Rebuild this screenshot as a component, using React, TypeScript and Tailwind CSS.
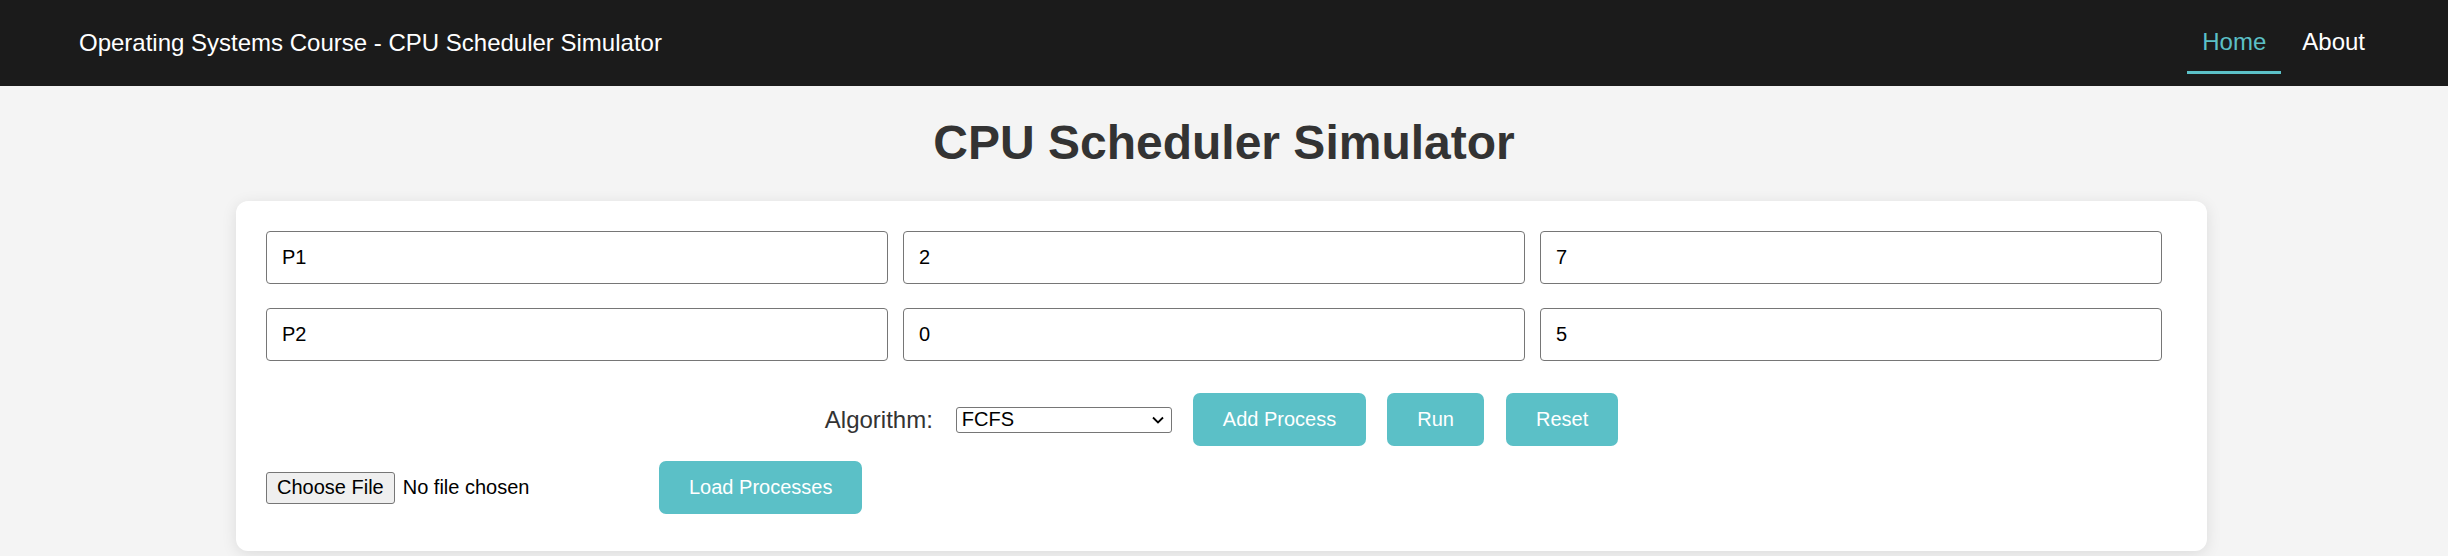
import React from "react";

export default function App() {
  const btn =
    "h-[53px] px-[30px] rounded-[7px] bg-[#5bc0c7] text-white text-[20px] leading-[23px] flex items-center justify-center";
  const inp =
    "h-[53px] w-full border border-[#767676] rounded-[4px] px-[15px] text-[20px] text-black bg-white outline-none";
  return (
    <div className="min-h-screen bg-[#f4f4f4] font-['Liberation_Sans',Arial,sans-serif]">
      <nav className="h-[86px] bg-[#1b1b1b] flex items-center justify-between pl-[79px] pr-[68px]">
        <div className="text-white text-[24px] leading-[28px]">
          Operating Systems Course - CPU Scheduler Simulator
        </div>
        <div className="flex items-center gap-[6px] text-[24px] leading-[28px]">
          <a className="px-[15px] pt-[15px] pb-[15px] border-b-[3px] border-[#5bc0c7] text-[#5bc0c7]">
            Home
          </a>
          <a className="px-[15px] pt-[15px] pb-[18px] text-white">About</a>
        </div>
      </nav>

      <h1 className="mt-[29px] mb-[31px] text-center text-[48px] leading-[55px] font-bold text-[#333]">
        CPU Scheduler Simulator
      </h1>

      <div className="ml-[236px] w-[1971px] bg-white rounded-[12px] shadow-[0_3px_15px_rgba(0,0,0,0.1)] px-[30px] pt-[30px] pb-[37px]">
        <div className="w-[1896px] grid grid-cols-3 gap-x-[15px] gap-y-[24px]">
          <input className={inp} defaultValue="P1" />
          <input className={inp} defaultValue="2" />
          <input className={inp} defaultValue="7" />
          <input className={inp} defaultValue="P2" />
          <input className={inp} defaultValue="0" />
          <input className={inp} defaultValue="5" />
        </div>

        <div className="mt-[32px] flex items-center justify-center">
          <span className="text-[24px] leading-[28px] text-[#333]">Algorithm:</span>
          <div className="relative ml-[23px] w-[216px] h-[26px]">
            <select
              className="appearance-none w-full h-full border border-[#767676] rounded-[3px] bg-white pl-[5px] text-[20px] leading-[23px] text-black outline-none"
              defaultValue="FCFS"
            >
              <option>FCFS</option>
              <option>SJF</option>
              <option>Round Robin</option>
            </select>
            <svg
              className="absolute right-[8px] top-[9px] pointer-events-none"
              width="12"
              height="8"
              viewBox="0 0 12 8"
            >
              <polyline points="1,1.5 6,6.5 11,1.5" fill="none" stroke="#000" strokeWidth="1.8" />
            </svg>
          </div>
          <button className={btn + " ml-[21px]"}>Add Process</button>
          <button className={btn + " ml-[21px]"}>Run</button>
          <button className={btn + " ml-[22px]"}>Reset</button>
        </div>

        <div className="mt-[15px] flex items-center">
          <div className="w-[378px] flex items-center">
            <span className="h-[32px] flex items-center border border-[#767676] bg-[#efefef] rounded-[3px] px-[10px] text-[20px] leading-[23px] text-black">
              Choose File
            </span>
            <span className="ml-[8px] text-[20px] leading-[23px] text-black">No file chosen</span>
          </div>
          <button className={btn + " ml-[15px] h-[52px]"}>Load Processes</button>
        </div>
      </div>
    </div>
  );
}
